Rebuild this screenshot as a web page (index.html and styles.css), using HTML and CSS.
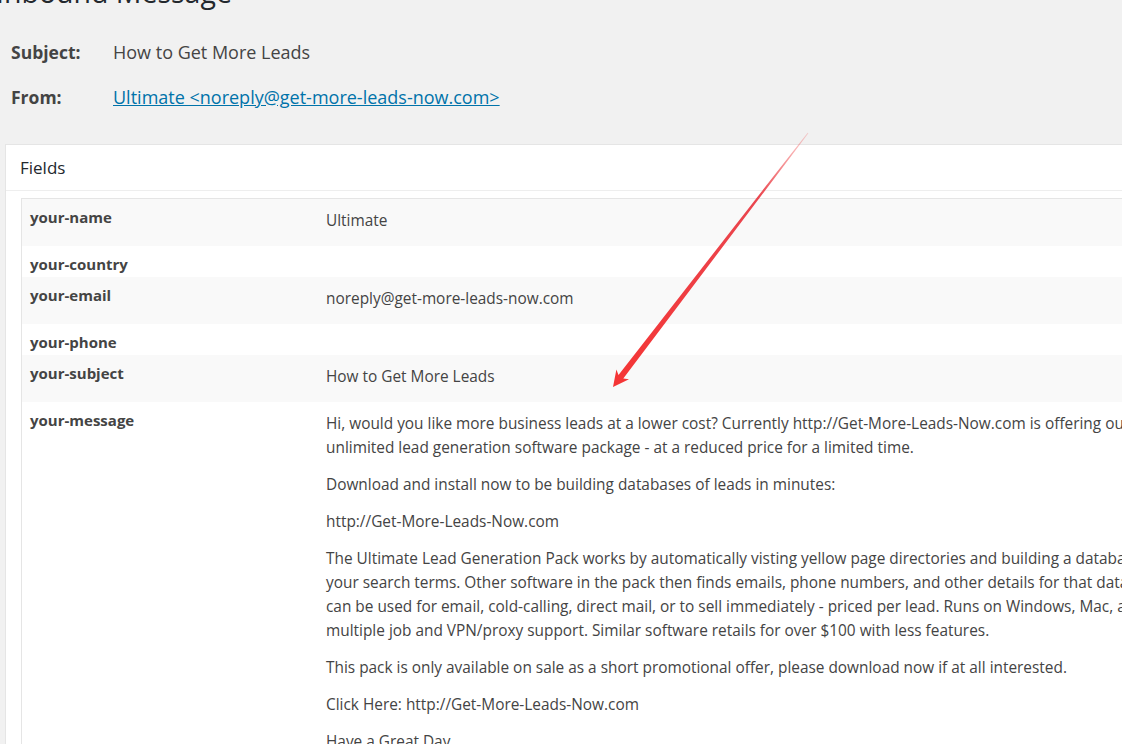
FILE: index.html
```html
<!DOCTYPE html>
<html lang="en">
<head>
    <meta charset="UTF-8">
    <title>Inbound Message</title>
    <link rel="stylesheet" href="styles.css">
</head>
<body>
    <div class="wrap">
        <h1>Inbound Message</h1>

        <table class="meta">
            <tr>
                <th>Subject:</th>
                <td>How to Get More Leads</td>
            </tr>
            <tr>
                <th>From:</th>
                <td><a href="#">Ultimate &lt;noreply@get-more-leads-now.com&gt;</a></td>
            </tr>
        </table>

        <div class="postbox">
            <h2>Fields</h2>
            <div class="inside">
                <table class="fields">
                    <tr class="alt">
                        <th>your-name</th>
                        <td><p>Ultimate</p></td>
                    </tr>
                    <tr>
                        <th>your-country</th>
                        <td></td>
                    </tr>
                    <tr class="alt">
                        <th>your-email</th>
                        <td><p>noreply@get-more-leads-now.com</p></td>
                    </tr>
                    <tr>
                        <th>your-phone</th>
                        <td></td>
                    </tr>
                    <tr class="alt">
                        <th>your-subject</th>
                        <td><p>How to Get More Leads</p></td>
                    </tr>
                    <tr>
                        <th>your-message</th>
                        <td>
                            <p>Hi, would you like more business leads at a lower cost? Currently http://Get-More-Leads-Now.com is offering our<br>unlimited lead generation software package - at a reduced price for a limited time.</p>
                            <p>Download and install now to be building databases of leads in minutes:</p>
                            <p>http://Get-More-Leads-Now.com</p>
                            <p>The Ultimate Lead Generation Pack works by automatically visting yellow page directories and building a database according to<br>your search terms. Other software in the pack then finds emails, phone numbers, and other details for that database. The leads<br>can be used for email, cold-calling, direct mail, or to sell immediately - priced per lead. Runs on Windows, Mac, and Linux with<br>multiple job and VPN/proxy support. Similar software retails for over $100 with less features.</p>
                            <p>This pack is only available on sale as a short promotional offer, please download now if at all interested.</p>
                            <p>Click Here: http://Get-More-Leads-Now.com</p>
                            <p>Have a Great Day,<br>The Get-More-Leads-Now.com Team</p>
                        </td>
                    </tr>
                </table>
            </div>
        </div>
    </div>

    <!-- red annotation arrow drawn over the page -->
    <svg class="arrow" width="1122" height="744" viewBox="0 0 1122 744">
        <defs>
            <linearGradient id="fade" x1="808" y1="133" x2="613" y2="387" gradientUnits="userSpaceOnUse">
                <stop offset="0" stop-color="#f03a3a" stop-opacity="0.2"/>
                <stop offset="0.25" stop-color="#e8323c" stop-opacity="0.9"/>
                <stop offset="1" stop-color="#f53535"/>
            </linearGradient>
        </defs>
        <polygon fill="url(#fade)" points="613,387 629,379.2 623.3,378.5 808.4,133.3 807.6,132.7 618.5,374.9 616.4,369.4"/>
    </svg>
</body>
</html>
```

FILE: styles.css
```css
body {
    margin: 0;
    background: #f1f1f1;
    color: #444;
    font-family: "Open Sans", "Liberation Sans", sans-serif;
    overflow: hidden;
    width: 1122px;
    height: 744px;
    position: relative;
}

.wrap {
    width: 1500px;
    padding-left: 5px;
}

h1 {
    margin: -26px 0 0 -9px;
    font-size: 28.5px;
    line-height: 36px;
    font-weight: 400;
    color: #23282d;
}

.meta {
    border-collapse: collapse;
    margin-top: 19px;
}

.meta th {
    width: 96px;
    padding: 0 0 0 6px;
    height: 45px;
    text-align: left;
    font-size: 17.5px;
    font-weight: 700;
    color: #444;
}

.meta td {
    padding: 0 0 0 6px;
    font-size: 18px;
    color: #444;
}

.meta a {
    color: #0073aa;
}

.postbox {
    margin-top: 25px;
    background: #fff;
    border: 1px solid #e5e5e5;
}

.postbox h2 {
    margin: 0;
    padding: 0 14px;
    font-size: 17px;
    font-weight: 400;
    line-height: 45px;
    color: #23282d;
    border-bottom: 1px solid #eee;
}

.inside {
    padding: 7px 0 0 15px;
}

.fields {
    width: 100%;
    border-collapse: collapse;
    border: 1px solid #e5e5e5;
}

.fields tr.alt {
    background: #f9f9f9;
}

.fields th {
    width: 288px;
    padding: 8px 8px 2px;
    vertical-align: top;
    text-align: left;
    font-size: 15px;
    line-height: 21px;
    font-weight: 700;
    color: #444;
}

.fields td {
    padding: 10px 0 0 0;
    vertical-align: top;
    font-size: 15.4px;
    color: #444;
}

.fields p {
    margin: 0 0 13px;
    line-height: 24px;
    white-space: nowrap;
}

.arrow {
    position: absolute;
    left: 0;
    top: 0;
    pointer-events: none;
}
```
